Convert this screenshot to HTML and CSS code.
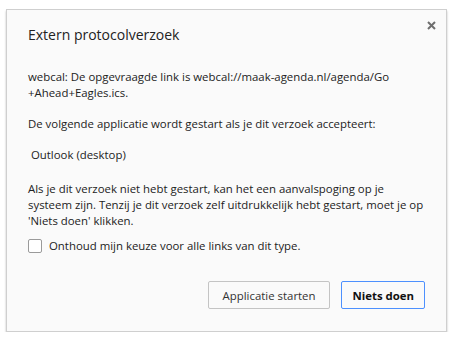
FILE: index.html
```html
<!DOCTYPE html>
<html lang="nl">
<head>
    <meta charset="UTF-8">
    <title>Extern protocolverzoek</title>
    <link rel="stylesheet" href="styles.css">
</head>
<body>
    <div class="dialog">
        <button class="close" aria-label="Sluiten">
            <svg width="9" height="9" viewBox="0 0 9 9">
                <path d="M1 1 L8 8 M8 1 L1 8" stroke="#6e6e6e" stroke-width="2"/>
            </svg>
        </button>

        <h1 class="title">Extern protocolverzoek</h1>

        <div class="content">
            <p>webcal: De opgevraagde link is webcal://maak-agenda.nl/agenda/Go<br>+Ahead+Eagles.ics.</p>
            <p>De volgende applicatie wordt gestart als je dit verzoek accepteert:</p>
            <p class="app">&nbsp;Outlook (desktop)</p>
            <p>Als je dit verzoek niet hebt gestart, kan het een aanvalspoging op je systeem zijn. Tenzij je dit verzoek zelf uitdrukkelijk hebt gestart, moet je op 'Niets doen' klikken.</p>
        </div>

        <label class="remember">
            <span class="box"></span>
            Onthoud mijn keuze voor alle links van dit type.
        </label>

        <div class="actions">
            <button class="btn">Applicatie starten</button>
            <button class="btn primary">Niets doen</button>
        </div>
    </div>
</body>
</html>
```

FILE: styles.css
```css
* {
    margin: 0;
    padding: 0;
    box-sizing: border-box;
}

body {
    background-color: white;
    font-family: "Open Sans", "Noto Sans", sans-serif;
    color: #222;
}

.dialog {
    position: relative;
    margin: 9px 0 0 6px;
    width: 441px;
    height: 323px;
    background-color: #fafafa;
    border: 1px solid #cfcfcf;
    box-shadow: 0 2px 2px rgba(0,0,0,0.25);
    padding: 16px 21px 0 21px;
}

.close {
    position: absolute;
    top: 10px;
    right: 9px;
    width: 11px;
    height: 11px;
    border: none;
    background: none;
    display: flex;
    align-items: center;
    justify-content: center;
}

.title {
    font-size: 14px;
    font-weight: 400;
    line-height: 18px;
    color: #222;
    margin-bottom: 25px;
}

.content p {
    font-size: 11.4px;
    line-height: 16px;
    margin-bottom: 15px;
}

.content .app {
    margin-bottom: 18px;
}

.remember {
    display: flex;
    align-items: center;
    gap: 7px;
    font-size: 11.4px;
    margin-top: -6px;
}

.box {
    width: 14px;
    height: 14px;
    border: 1px solid #9a9a9a;
    border-radius: 2px;
    background-color: white;
}

.actions {
    display: flex;
    justify-content: flex-end;
    gap: 11px;
    margin-top: 28px;
}

.btn {
    height: 28px;
    padding: 0 14px;
    font-family: "Open Sans", "Noto Sans", sans-serif;
    font-size: 11.4px;
    color: #333;
    background-color: #fafafa;
    border: 1px solid #c4c4c4;
    border-radius: 2px;
}

.btn.primary {
    font-weight: 700;
    color: #111;
    border-color: #4d90fe;
    padding: 0 10px;
}
```
